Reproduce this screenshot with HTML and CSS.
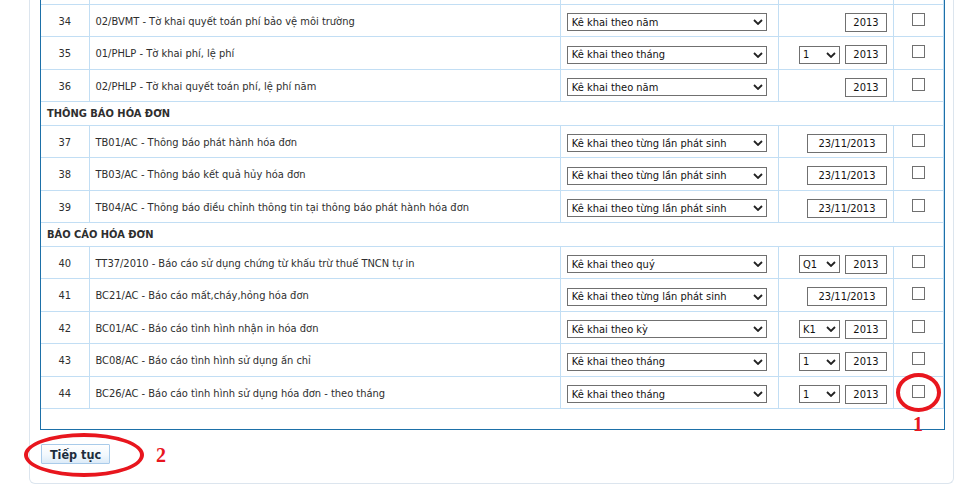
FILE: index.html
```html
<!DOCTYPE html>
<html lang="vi">
<head>
<meta charset="utf-8">
<title>Tờ khai</title>
<link rel="stylesheet" href="styles.css">
</head>
<body>
<div class="panel">
  <div class="frame">
    <table class="grid">
      <colgroup>
        <col class="c-num"><col class="c-desc"><col class="c-kind"><col class="c-period"><col class="c-chk">
      </colgroup>
      <tr class="stub"><td></td><td></td><td></td><td></td><td></td></tr>
      <tr>
        <td class="num">34</td><td class="desc">02/BVMT - Tờ khai quyết toán phí bảo vệ môi trường</td>
        <td class="kind"><div class="sel wide"><span>Kê khai theo năm</span><svg class="chev" viewBox="0 0 10 6"><path d="M1 1 L5 5 L9 1"/></svg></div></td>
        <td class="period"><div class="per"><div class="inp year">2013</div></div></td>
        <td class="chk"><span class="box"></span></td>
      </tr>
      <tr>
        <td class="num">35</td><td class="desc">01/PHLP - Tờ khai phí, lệ phí</td>
        <td class="kind"><div class="sel wide"><span>Kê khai theo tháng</span><svg class="chev" viewBox="0 0 10 6"><path d="M1 1 L5 5 L9 1"/></svg></div></td>
        <td class="period"><div class="per"><div class="sel small"><span>1</span><svg class="chev" viewBox="0 0 10 6"><path d="M1 1 L5 5 L9 1"/></svg></div><div class="inp year">2013</div></div></td>
        <td class="chk"><span class="box"></span></td>
      </tr>
      <tr>
        <td class="num">36</td><td class="desc">02/PHLP - Tờ khai quyết toán phí, lệ phí năm</td>
        <td class="kind"><div class="sel wide"><span>Kê khai theo năm</span><svg class="chev" viewBox="0 0 10 6"><path d="M1 1 L5 5 L9 1"/></svg></div></td>
        <td class="period"><div class="per"><div class="inp year">2013</div></div></td>
        <td class="chk"><span class="box"></span></td>
      </tr>
      <tr class="group"><td colspan="5">THÔNG BÁO HÓA ĐƠN</td></tr>
      <tr>
        <td class="num">37</td><td class="desc">TB01/AC - Thông báo phát hành hóa đơn</td>
        <td class="kind"><div class="sel wide"><span>Kê khai theo từng lần phát sinh</span><svg class="chev" viewBox="0 0 10 6"><path d="M1 1 L5 5 L9 1"/></svg></div></td>
        <td class="period"><div class="per"><div class="inp date">23/11/2013</div></div></td>
        <td class="chk"><span class="box"></span></td>
      </tr>
      <tr>
        <td class="num">38</td><td class="desc">TB03/AC - Thông báo kết quả hủy hóa đơn</td>
        <td class="kind"><div class="sel wide"><span>Kê khai theo từng lần phát sinh</span><svg class="chev" viewBox="0 0 10 6"><path d="M1 1 L5 5 L9 1"/></svg></div></td>
        <td class="period"><div class="per"><div class="inp date">23/11/2013</div></div></td>
        <td class="chk"><span class="box"></span></td>
      </tr>
      <tr>
        <td class="num">39</td><td class="desc">TB04/AC - Thông báo điều chỉnh thông tin tại thông báo phát hành hóa đơn</td>
        <td class="kind"><div class="sel wide"><span>Kê khai theo từng lần phát sinh</span><svg class="chev" viewBox="0 0 10 6"><path d="M1 1 L5 5 L9 1"/></svg></div></td>
        <td class="period"><div class="per"><div class="inp date">23/11/2013</div></div></td>
        <td class="chk"><span class="box"></span></td>
      </tr>
      <tr class="group"><td colspan="5">BÁO CÁO HÓA ĐƠN</td></tr>
      <tr>
        <td class="num">40</td><td class="desc">TT37/2010 - Báo cáo sử dụng chứng từ khấu trừ thuế TNCN tự in</td>
        <td class="kind"><div class="sel wide"><span>Kê khai theo quý</span><svg class="chev" viewBox="0 0 10 6"><path d="M1 1 L5 5 L9 1"/></svg></div></td>
        <td class="period"><div class="per"><div class="sel small"><span>Q1</span><svg class="chev" viewBox="0 0 10 6"><path d="M1 1 L5 5 L9 1"/></svg></div><div class="inp year">2013</div></div></td>
        <td class="chk"><span class="box"></span></td>
      </tr>
      <tr>
        <td class="num">41</td><td class="desc">BC21/AC - Báo cáo mất,cháy,hỏng hóa đơn</td>
        <td class="kind"><div class="sel wide"><span>Kê khai theo từng lần phát sinh</span><svg class="chev" viewBox="0 0 10 6"><path d="M1 1 L5 5 L9 1"/></svg></div></td>
        <td class="period"><div class="per"><div class="inp date">23/11/2013</div></div></td>
        <td class="chk"><span class="box"></span></td>
      </tr>
      <tr>
        <td class="num">42</td><td class="desc">BC01/AC - Báo cáo tình hình nhận in hóa đơn</td>
        <td class="kind"><div class="sel wide"><span>Kê khai theo kỳ</span><svg class="chev" viewBox="0 0 10 6"><path d="M1 1 L5 5 L9 1"/></svg></div></td>
        <td class="period"><div class="per"><div class="sel small"><span>K1</span><svg class="chev" viewBox="0 0 10 6"><path d="M1 1 L5 5 L9 1"/></svg></div><div class="inp year">2013</div></div></td>
        <td class="chk"><span class="box"></span></td>
      </tr>
      <tr>
        <td class="num">43</td><td class="desc">BC08/AC - Báo cáo tình hình sử dụng ấn chỉ</td>
        <td class="kind"><div class="sel wide"><span>Kê khai theo tháng</span><svg class="chev" viewBox="0 0 10 6"><path d="M1 1 L5 5 L9 1"/></svg></div></td>
        <td class="period"><div class="per"><div class="sel small"><span>1</span><svg class="chev" viewBox="0 0 10 6"><path d="M1 1 L5 5 L9 1"/></svg></div><div class="inp year">2013</div></div></td>
        <td class="chk"><span class="box"></span></td>
      </tr>
      <tr>
        <td class="num">44</td><td class="desc">BC26/AC - Báo cáo tình hình sử dụng hóa đơn - theo tháng</td>
        <td class="kind"><div class="sel wide"><span>Kê khai theo tháng</span><svg class="chev" viewBox="0 0 10 6"><path d="M1 1 L5 5 L9 1"/></svg></div></td>
        <td class="period"><div class="per"><div class="sel small"><span>1</span><svg class="chev" viewBox="0 0 10 6"><path d="M1 1 L5 5 L9 1"/></svg></div><div class="inp year">2013</div></div></td>
        <td class="chk"><span class="box"></span></td>
      </tr>
    </table>
  </div>
  <div class="actions">
    <button class="btn" type="button">Tiếp tục</button>
  </div>
</div>
<div class="mark ring ring-1"></div>
<div class="mark label label-1">1</div>
<div class="mark ring ring-2"></div>
<div class="mark label label-2">2</div>
</body>
</html>
```
FILE: styles.css
```css
html, body {
  margin: 0;
  padding: 0;
  background: #fff;
}
body {
  position: relative;
  width: 954px;
  height: 493px;
  overflow: hidden;
  font-family: "DejaVu Sans Condensed", "DejaVu Sans", sans-serif;
  font-size: 11px;
  color: #2e2e2e;
}
.panel {
  margin-left: 29px;
  width: 925px;
  border: 1px solid #dce5ee;
  border-top: none;
  border-radius: 0 0 6px 6px;
  padding: 0 8px 19px 10px;
  box-sizing: border-box;
}
.frame {
  border: 1px solid #1d70a8;
  border-top: none;
  padding-bottom: 20px;
}
.grid {
  width: 100%;
  border-collapse: collapse;
  table-layout: fixed;
}
.c-num { width: 48px; }
.c-desc { width: 471px; }
.c-kind { width: 218px; }
.c-period { width: 115px; }
.c-chk { width: 50px; }
.grid td {
  border: 1px solid #c2def4;
  height: 29.5px;
  padding: 2px 0 0 0;
  vertical-align: middle;
  white-space: nowrap;
  overflow: hidden;
}
.grid tr td:first-child { border-left: none; }
.grid .stub td {
  height: 3.5px;
  padding: 0;
  border-top: none;
}
.grid .group td {
  height: 21.5px;
  padding: 1px 0 0 6px;
  font-weight: bold;
}
.num { text-align: center; }
.grid .desc { padding-left: 6px; }
.grid .kind { padding-left: 6px; }
.sel {
  display: flex;
  align-items: center;
  justify-content: space-between;
  box-sizing: border-box;
  border: 1px solid #707070;
  background: #fff;
  color: #111;
  height: 18px;
  padding: 0 3px 0 4px;
  margin-top: 2px;
}
.sel.wide { width: 200px; }
.sel.small { width: 41px; padding-left: 3px; }
.chev {
  width: 10px;
  height: 6px;
  fill: none;
  stroke: #222;
  stroke-width: 1.8;
}
.per {
  display: flex;
  justify-content: flex-end;
  align-items: center;
  gap: 5px;
  padding-right: 6px;
  margin-top: 2px;
}
.per .sel { margin-top: 0; }
.inp {
  box-sizing: border-box;
  border: 1px solid #707070;
  height: 19px;
  line-height: 17px;
  text-align: center;
  color: #111;
}
.inp.year { width: 42px; }
.inp.date { width: 80px; }
.chk { text-align: center; }
.box {
  display: inline-block;
  width: 13px;
  height: 13px;
  box-sizing: border-box;
  border: 1px solid #707070;
  background: #fff;
  vertical-align: middle;
  margin-top: -5px;
  margin-left: 1px;
}
.actions {
  padding-top: 14px;
}
.btn {
  margin-left: 1px;
  width: 69px;
  height: 20px;
  border: 1px solid #a9cbea;
  border-radius: 1px;
  background: linear-gradient(#ffffff, #f2f8fd 55%, #dcebf8);
  font-family: "DejaVu Sans Condensed", "DejaVu Sans", sans-serif;
  font-weight: bold;
  font-size: 12.5px;
  color: #1c2c3c;
  padding: 0;
  display: block;
}
.mark { position: absolute; }
.ring {
  border: 4px solid #e8161e;
  border-radius: 50%;
  box-sizing: border-box;
}
.ring-1 { left: 896px; top: 373px; width: 45px; height: 39px; }
.ring-2 { left: 24px; top: 433px; width: 120px; height: 44px; }
.label {
  font-family: "Liberation Serif", serif;
  font-weight: bold;
  font-size: 20px;
  color: #e8161e;
  line-height: 1;
}
.label-1 { left: 913px; top: 414px; }
.label-2 { left: 156px; top: 445px; }
```
